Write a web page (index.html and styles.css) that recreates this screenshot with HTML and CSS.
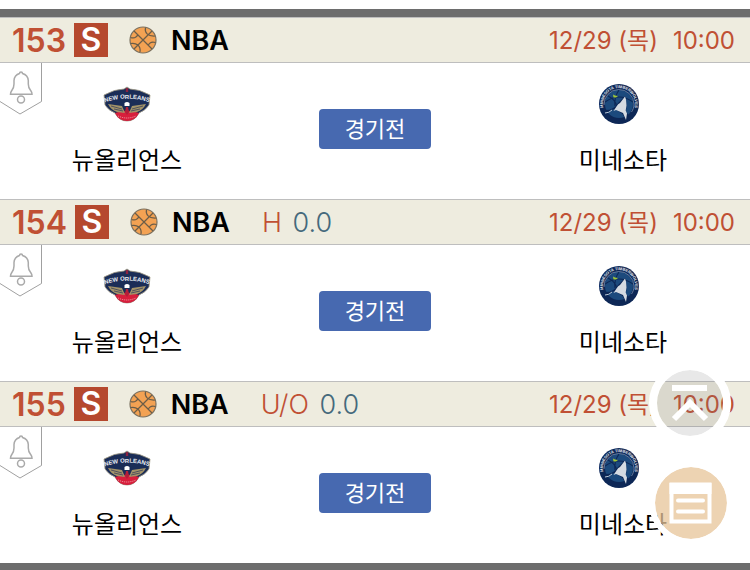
FILE: index.html
```html
<!DOCTYPE html>
<html lang="ko">
<head>
  <meta charset="UTF-8">
  <meta name="viewport" content="width=device-width, initial-scale=1">
  <title>NBA 경기 목록</title>
  <link rel="stylesheet" href="styles.css">
</head>
<body>
  <!-- 공용 아이콘 -->
  <svg class="sprite" aria-hidden="true">
    <symbol id="icon-ball" viewBox="0 0 28 28">
      <circle cx="14" cy="14" r="13" fill="#f3a253" stroke="#7a705f" stroke-width="1.2"/>
      <path d="M5 5l18 18M23 5L5 23M16.500 1.500c-1 5 2 9 9.500 8.500M1.500 17.500c6-1 10.500 2 9.500 8.500M1.500 11.500c3 1 6 0 7.500-3M26.500 16.500c-3-1-6 0-7.500 3" fill="none" stroke="#6b5d48" stroke-width="1.200"/>
    </symbol>
    <symbol id="icon-bell" viewBox="0 0 42 52">
      <path d="M41.500 0v38.500L20 51 0 38.500" fill="none" stroke="#a0a0a0"/>
      <path d="M19.500 10.500a1.500 1.500 0 0 1 3 0C26 11.500 28 14 28.300 17.500V21c0 4 1.200 5 2.700 7 .8 1.200 1 2 1 3.200H10.500c0-1.200.2-2 1-3.200 1.500-2 2.500-3 2.500-7v-3.500c.3-3.500 2-6 5.500-7z" fill="none" stroke="#aaa" stroke-width="1.500"/>
      <circle cx="21" cy="36.500" r="3.500" fill="none" stroke="#aaa" stroke-width="1.500"/>
    </symbol>
    <symbol id="logo-pelicans" viewBox="0 0 48 40">
      <path d="M1 11Q12 5 21 5l3-2 3 2q9 0 20 6l-1 10q-3 5-10 8-4 8-12 8t-12-8q-7-3-10-8z" fill="#1b2d57" stroke="#a59d85" stroke-width=".8"/>
      <path d="M12 29q12-5 24 0-4 8-12 8t-12-8z" fill="#d81f3c"/>
      <path d="M15 32q9 4 18 0" fill="none" stroke="#f0a5ad" stroke-width="1" stroke-dasharray="1 1"/>
      <path d="M5 20l14 2 3 7-8-1q-6-2-9-8zM43 20l-14 2-3 7 8-1q6-2 9-8z" fill="#a39368"/>
      <path d="M8 22l11 3M11 25l9 2M40 22l-11 3M37 25l-9 2" stroke="#3a405a" stroke-width=".8"/>
      <path id="pelicans-arc" d="M1 18.500Q24 10.500 47 18.500" fill="none"/>
      <text class="logo-word"><textPath href="#pelicans-arc" startOffset="50%">NEW ORLEANS</textPath></text>
      <circle cx="24" cy="21" r="4" fill="#1b2d57"/>
      <path d="M21.500 19q2.500-2 5 0v3h-5z" fill="#fff"/>
      <path d="M23 23h2l1 5-2 3-2-3z" fill="#b31f39"/>
      <path d="M22.800 4h2.400v4h-2.400z" fill="#8a2340"/>
    </symbol>
    <symbol id="logo-wolves" viewBox="0 0 40 40" preserveAspectRatio="xMinYMid">
      <circle cx="20" cy="20" r="20" fill="#0d2756"/>
      <circle cx="20" cy="20" r="14" fill="#1c4a7d"/>
      <path d="M6 18q7-5 14-5t14 5M20 6q-5 7-4 16M9 12q8 4 9 11" fill="none" stroke="#0d2756" stroke-width="1.200"/>
      <path d="M5 21a15 15 0 0 1 30-1c0 3-1 6-2.500 8" fill="none" stroke="#9cafc7" stroke-width=".6"/>
      <path id="wolves-arc" d="M7.500 30A16 16 0 1 1 32.500 30" fill="none"/>
      <text class="logo-ring"><textPath href="#wolves-arc" startOffset="50%">MINNESOTA TIMBERWOLVES</textPath></text>
      <path d="M5 26q9 1 14-7l7-7 1 3 .5 7q0 4-1 5l3 4-2 6-4-7-6-4q-5-2-7 2-3 3-6 3z" fill="#0d2756"/>
      <path d="M26 12.500l1 3 .5 6-.8 5 1.300 3-1 6.500-3-7-7-3-2.500 1 3-4.500q1.500-3 3.500-3.500z" fill="#d5dbe2"/>
      <path d="M6 29q4 0 7-3" fill="none" stroke="#b8c6d5" stroke-width="1"/>
      <path d="M14 10.500l2 1 3 .5-2 1.500h-2.500z" fill="#a1c83a"/>
    </symbol>
  </svg>

  <main class="game-list">
    <article class="game">
      <header class="game-header">
        <span class="game-no">153</span>
        <span class="badge">S</span>
        <svg class="ball" aria-hidden="true"><use href="#icon-ball"/></svg>
        <span class="league">NBA</span>
        <time class="game-time"><span>12/29 (목)</span><span>10:00</span></time>
      </header>
      <div class="game-body">
        <button type="button" class="alarm" aria-label="알림"><svg><use href="#icon-bell"/></svg></button>
        <div class="team">
          <svg class="team-logo" aria-hidden="true"><use href="#logo-pelicans"/></svg>
          <span class="team-name">뉴올리언스</span>
        </div>
        <button type="button" class="state">경기전</button>
        <div class="team">
          <svg class="team-logo" aria-hidden="true"><use href="#logo-wolves"/></svg>
          <span class="team-name">미네소타</span>
        </div>
      </div>
    </article>

    <article class="game">
      <header class="game-header">
        <span class="game-no">154</span>
        <span class="badge">S</span>
        <svg class="ball" aria-hidden="true"><use href="#icon-ball"/></svg>
        <span class="league">NBA</span>
        <span class="option">H <span class="option-value">0.0</span></span>
        <time class="game-time"><span>12/29 (목)</span><span>10:00</span></time>
      </header>
      <div class="game-body">
        <button type="button" class="alarm" aria-label="알림"><svg><use href="#icon-bell"/></svg></button>
        <div class="team">
          <svg class="team-logo" aria-hidden="true"><use href="#logo-pelicans"/></svg>
          <span class="team-name">뉴올리언스</span>
        </div>
        <button type="button" class="state">경기전</button>
        <div class="team">
          <svg class="team-logo" aria-hidden="true"><use href="#logo-wolves"/></svg>
          <span class="team-name">미네소타</span>
        </div>
      </div>
    </article>

    <article class="game">
      <header class="game-header">
        <span class="game-no">155</span>
        <span class="badge">S</span>
        <svg class="ball" aria-hidden="true"><use href="#icon-ball"/></svg>
        <span class="league">NBA</span>
        <span class="option">U/O <span class="option-value">0.0</span></span>
        <time class="game-time"><span>12/29 (목)</span><span>10:00</span></time>
      </header>
      <div class="game-body">
        <button type="button" class="alarm" aria-label="알림"><svg><use href="#icon-bell"/></svg></button>
        <div class="team">
          <svg class="team-logo" aria-hidden="true"><use href="#logo-pelicans"/></svg>
          <span class="team-name">뉴올리언스</span>
        </div>
        <button type="button" class="state">경기전</button>
        <div class="team">
          <svg class="team-logo" aria-hidden="true"><use href="#logo-wolves"/></svg>
          <span class="team-name">미네소타</span>
        </div>
      </div>
    </article>
  </main>

  <!-- 플로팅 버튼 -->
  <div class="floating">
    <button type="button" class="float-btn to-top" aria-label="맨 위로">
      <svg viewBox="0 0 66 66" fill="none" stroke="#fff" stroke-width="6">
        <path d="M15 18h35M17 49l16-16 16 16"/>
      </svg>
    </button>
    <button type="button" class="float-btn slip" aria-label="목록">
      <svg viewBox="0 0 72 72" fill="none" stroke="#fff" stroke-width="4">
        <path d="M16.500 17.500h38v37h-38z"/>
        <path d="M14.500 16h42v11h-42z" fill="#fff" stroke="none"/>
        <path d="M23 33.500h25M23 44.500h25" stroke-linecap="round"/>
      </svg>
    </button>
  </div>
</body>
</html>
```

FILE: styles.css
```css
* {
  box-sizing: border-box;
}

body {
  margin: 0;
  background-color: #fff;
  color: #000;
  font-family: Inter, 'Noto Sans CJK KR', sans-serif;
}

button {
  padding: 0;
  border: none;
  background: none;
  font-family: inherit;
  cursor: pointer;
}

svg {
  display: block;
}

.sprite {
  display: none;
}

.game-list {
  margin-top: 9px;
  border-top: 8px solid #6d6d6d;
  border-bottom: 7px solid #6d6d6d;
}

/* 경기 헤더 */
.game-header {
  display: flex;
  align-items: center;
  height: 46px;
  padding: 0 15px 0 12px;
  background-color: #eeecdf;
  border-top: 1px solid #bebebe;
  border-bottom: 1px solid #bebebe;
  white-space: nowrap;
}

.game-no {
  color: #c05034;
  font-size: 32px;
  font-weight: 600;
}

.badge {
  width: 34px;
  margin-left: 8px;
  background-color: #b5482e;
  color: #fff;
  font-size: 32px;
  font-weight: 600;
  line-height: 34px;
  text-align: center;
}

.ball {
  width: 28px;
  height: 28px;
  margin-left: 21px;
}

.league {
  margin-left: 14px;
  font-size: 27px;
  font-weight: 600;
}

.option {
  margin-left: 32px;
  color: #c05034;
  font-size: 27px;
  font-weight: 300;
}

.option-value {
  margin-left: 3px;
  color: #45697c;
}

.game-time {
  display: flex;
  align-items: baseline;
  gap: 15px;
  margin-left: auto;
  padding-top: 2px;
  color: #c05034;
  font-size: 24px;
  line-height: 32px;
}

/* 경기 내용 */
.game-body {
  position: relative;
  display: grid;
  grid-template-columns: repeat(3, 1fr);
  align-items: center;
  justify-items: center;
  padding: 21px 3px 22px;
}

.alarm {
  position: absolute;
  top: 0;
  left: 0;
}

.alarm svg {
  width: 42px;
  height: 52px;
}

.team {
  display: flex;
  flex-direction: column;
  align-items: center;
  gap: 17px;
}

.team-logo {
  width: 48px;
  height: 40px;
}

.team-name {
  font-family: 'Noto Sans CJK KR', sans-serif;
  font-size: 24px;
  line-height: 36px;
}

.state {
  width: 112px;
  margin-bottom: 4px;
  padding-bottom: 4px;
  border-radius: 4px;
  background-color: #4769b0;
  color: #fff;
  font-family: 'Noto Sans CJK KR', sans-serif;
  font-size: 22px;
  line-height: 36px;
}

.logo-word {
  fill: #e8ebf2;
  font-family: 'Liberation Sans', sans-serif;
  font-size: 6px;
  font-weight: 700;
  text-anchor: middle;
}

.logo-ring {
  fill: #e8ebf2;
  font-family: 'Liberation Sans', sans-serif;
  font-size: 4px;
  font-weight: 700;
  text-anchor: middle;
}

/* 오른쪽 아래 버튼 */
.floating {
  position: fixed;
  right: 17px;
  bottom: 25px;
  display: flex;
  flex-direction: column;
  gap: 17px;
}

.float-btn {
  border-style: solid;
  border-color: #fff;
  border-radius: 50%;
  background-clip: padding-box;
}

.to-top {
  width: 82px;
  height: 82px;
  border-width: 8px;
  background-color: rgba(120, 120, 120, 0.17);
}

.slip {
  width: 84px;
  height: 84px;
  border-width: 6px;
  background-color: rgba(231, 196, 152, 0.75);
}
```
